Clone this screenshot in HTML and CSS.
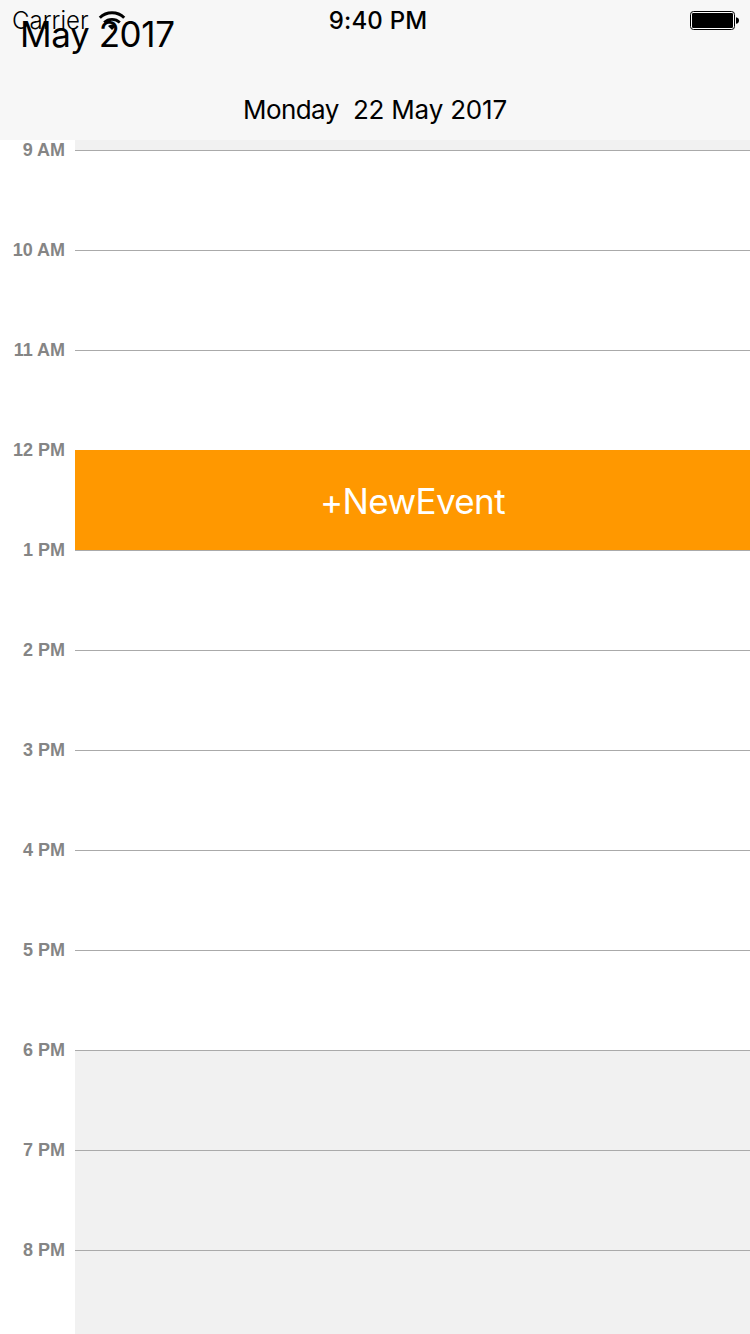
FILE: index.html
```html
<!DOCTYPE html>
<html lang="en">
<head>
<meta charset="utf-8">
<title>May 2017</title>
<link rel="stylesheet" href="styles.css">
</head>
<body>
<div class="screen">
  <header class="header">
    <div class="status">
      <div class="status-left">
        <span class="carrier">Carrier</span>
        <svg class="wifi" width="28" height="20" viewBox="0 0 28 20">
          <path d="M1.8 6.7A17.4 17.4 0 0 1 26.2 6.7" fill="none" stroke="#000" stroke-width="3"/>
          <path d="M6.2 11.4A11.4 11.4 0 0 1 21.8 11.4" fill="none" stroke="#000" stroke-width="2.8"/>
          <path d="M14 19L10 15A6 6 0 0 1 18 15Z"/>
        </svg>
      </div>
      <span class="clock">9:40 PM</span>
      <svg class="battery" width="50" height="20" viewBox="0 0 50 20">
        <rect x=".5" y=".5" width="44" height="18" rx="3" fill="#fff" stroke="#000"/>
        <rect x="2" y="2" width="41" height="15" rx="1.2"/>
        <path d="M46 6.2Q49 6.7 49 9.5T46 12.8Z"/>
      </svg>
    </div>
    <h1 class="title">May 2017</h1>
    <div class="date"><span class="weekday">Monday</span>&nbsp; 22 May 2017</div>
  </header>
  <main class="day">
    <div class="lead"></div>
    <div class="hour"><span class="label">9 AM</span><div class="slot"></div></div>
    <div class="hour"><span class="label">10 AM</span><div class="slot"></div></div>
    <div class="hour"><span class="label">11 AM</span><div class="slot"></div></div>
    <div class="hour"><span class="label">12 PM</span><div class="slot event"><span class="event-name">+NewEvent</span></div></div>
    <div class="hour"><span class="label">1 PM</span><div class="slot"></div></div>
    <div class="hour"><span class="label">2 PM</span><div class="slot"></div></div>
    <div class="hour"><span class="label">3 PM</span><div class="slot"></div></div>
    <div class="hour"><span class="label">4 PM</span><div class="slot"></div></div>
    <div class="hour"><span class="label">5 PM</span><div class="slot"></div></div>
    <div class="hour"><span class="label">6 PM</span><div class="slot off"></div></div>
    <div class="hour"><span class="label">7 PM</span><div class="slot off"></div></div>
    <div class="hour"><span class="label">8 PM</span><div class="slot off"></div></div>
  </main>
</div>
</body>
</html>
```
FILE: styles.css
```css
body {
  margin: 0;
  background: #fff;
  font-family: Inter, "Liberation Sans", sans-serif;
  color: #000;
}
.screen {
  display: flex;
  flex-direction: column;
  width: 750px;
  height: 1334px;
  overflow: hidden;
}
.header {
  position: relative;
  flex: none;
  box-sizing: border-box;
  height: 140px;
  padding-top: 14px;
  background: #f7f7f7;
}
/* The status bar is laid over the header and overlaps the title. */
.status {
  position: absolute;
  inset: 0 0 auto 0;
  display: grid;
  grid-template-columns: 1fr auto 1fr;
  align-items: center;
  box-sizing: border-box;
  height: 41px;
  padding: 0 10px 0 12px;
  font-size: 24px;
  line-height: 41px;
}
.status-left {
  display: flex;
  align-items: center;
  gap: 9px;
}
.carrier {
  font-weight: 300;
}
.clock {
  padding-left: 4px;
  font-weight: 500;
  letter-spacing: .2px;
}
.battery {
  justify-self: end;
}
.title {
  margin: 0 0 0 20px;
  font-size: 35px;
  font-weight: 400;
  line-height: 40px;
  letter-spacing: -.4px;
}
.date {
  margin-top: 36px;
  text-align: center;
  font-size: 26px;
  line-height: 40px;
  letter-spacing: -.2px;
}
.weekday {
  letter-spacing: -.6px;
}
.day {
  flex: none;
}
.lead {
  height: 10px;
  margin-left: 75px;
  background: #f1f1f1;
}
.hour {
  display: grid;
  grid-template-columns: 65px 675px;
  column-gap: 10px;
  height: 100px;
}
.label {
  height: 20px;
  margin-top: -10px;
  text-align: right;
  font: bold 18px/20px "Liberation Sans", Arial, sans-serif;
  color: #858585;
}
.slot {
  border-top: 1px solid #aaa;
}
.off {
  background: #f1f1f1;
}
.event {
  display: flex;
  align-items: center;
  justify-content: center;
  border-top-color: #ff9800;
  background: #ff9800;
}
.event-name {
  font-size: 35px;
  line-height: 40px;
  font-weight: 400;
  letter-spacing: -.6px;
  color: #fff;
}
```
